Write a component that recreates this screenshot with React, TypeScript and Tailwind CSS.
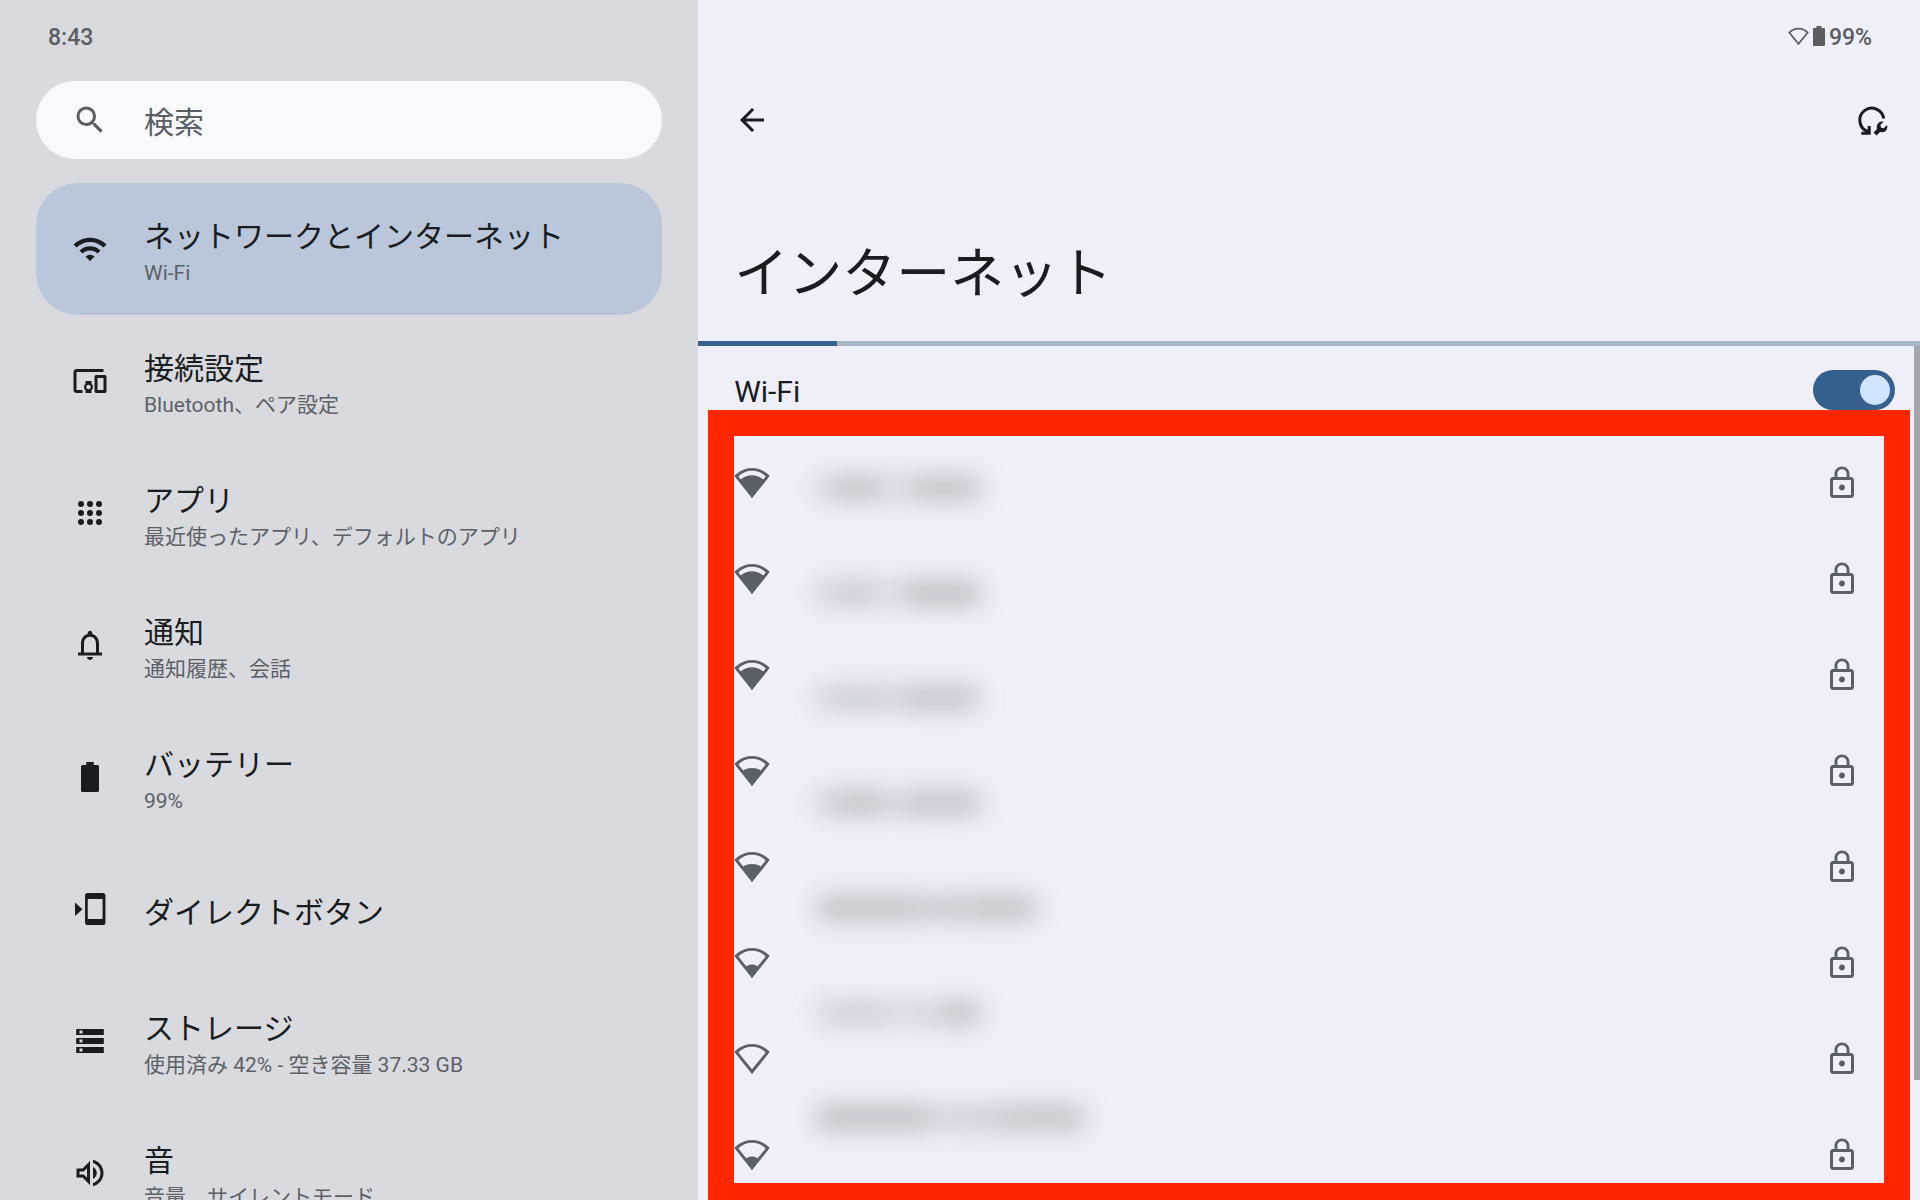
import type { ReactNode } from "react";
import { MdArrowBack, MdDevicesOther, MdLockOutline, MdOutlineVolumeUp, MdSearch, MdWifi } from "react-icons/md";

const AppsIcon = () => (
  <svg viewBox="0 0 24 24" className="w-9 h-9" fill="currentColor">
    {[6, 12, 18].map((y) => [6, 12, 18].map((x) => <circle key={`${x}-${y}`} cx={x} cy={y} r="2" />))}
  </svg>
);

const BellIcon = () => (
  <svg viewBox="0 0 24 24" className="w-9 h-9" fill="currentColor">
    <path d="M18 17v-6c0-3.07-1.63-5.64-4.5-6.32V4c0-.83-.67-1.5-1.5-1.5s-1.5.67-1.5 1.5v.68C7.64 5.36 6 7.92 6 11v6H4v2h16v-2h-2zm-2 0H8v-6c0-2.48 1.51-4.5 4-4.5s4 2.02 4 4.5v6zm-4 5c1.1 0 2-.9 2-2h-4c0 1.1.9 2 2 2z" />
  </svg>
);

const BatteryIcon = ({ viewBox = "0 0 24 24", className }: { viewBox?: string; className: string }) => (
  <svg viewBox={viewBox} className={className} fill="currentColor">
    <path d="M9.5 2h5v2H17a1 1 0 0 1 1 1v16a1 1 0 0 1-1 1H7a1 1 0 0 1-1-1V5a1 1 0 0 1 1-1h2.500z" />
  </svg>
);

const DirectButtonIcon = () => (
  <svg viewBox="0 0 24 24" className="w-9 h-9" fill="currentColor">
    <path d="M2 7.600v9l5-4.500z" />
    <path
      fillRule="evenodd"
      d="M10.400 1.300h10.200a1.700 1.700 0 0 1 1.700 1.700v18a1.700 1.700 0 0 1-1.700 1.700h-10.200A1.700 1.700 0 0 1 8.700 21V3a1.700 1.700 0 0 1 1.700-1.700zM10.500 5.300v13.400h9.900V5.300z"
    />
  </svg>
);

const StorageIcon = () => (
  <svg viewBox="0 0 24 24" className="w-9 h-9" fill="currentColor">
    <path
      fillRule="evenodd"
      d="M2.800 4h18.400v4H2.800zM5 5v2h2V5zM2.800 10h18.400v4H2.800zM5 11v2h2v-2zM2.800 16h18.400v4H2.800zM5 17v2h2v-2z"
    />
  </svg>
);

const fills: Record<number, string> = {
  1: "M12 22 7.500 15.300 8.300 14.200C10.300 12.500 13.700 12.500 15.700 14.200L16.500 15.300z",
  2: "M12 22 5.600 12.200C8.800 9.300 15.200 9.300 18.400 12.200z",
  3: "M12 22 3.900 10.200C8.500 5.700 15.500 5.700 20.100 10.200z",
};

const SignalIcon = ({ level, className }: { level: number; className: string }) => (
  <svg viewBox="0 0 24 24" className={className} fill="currentColor">
    <path
      fillRule="evenodd"
      d="M.2 7.400C3.300 4 7.400 2 12 2s8.700 2 11.800 5.400L12 22zM2.900 7.600 12 18.900l9.100-11.300C18.600 5.200 15.500 3.900 12 3.900S5.400 5.200 2.900 7.600z"
    />
    {level > 0 && <path d={fills[level]} />}
  </svg>
);

const RepairIcon = () => (
  <svg viewBox="0 0 36 36" className="w-9 h-9" fill="none" stroke="currentColor">
    <path strokeWidth="3" d="M29.700 16.500A12 12 0 1 0 13.200 29.200" />
    <path fill="currentColor" stroke="none" d="M13.700 24h3v8.700H7.300v-3h3.900l2.500-2z" />
    <path strokeWidth="4.200" d="M21 32l5.800-5.800" />
    <path
      fill="currentColor"
      stroke="none"
      d="M29.600 19.700a5.400 5.400 0 1 0 3.500 3.300l-3.400 3.300-2.600-.6-.7-2.700z"
    />
  </svg>
);

type Item = { title: string; sub?: string; icon: ReactNode; active?: boolean };

const items: Item[] = [
  { title: "ネットワークとインターネット", sub: "Wi-Fi", icon: <MdWifi className="w-9 h-9" />, active: true },
  { title: "接続設定", sub: "Bluetooth、ペア設定", icon: <MdDevicesOther className="w-9 h-9" /> },
  { title: "アプリ", sub: "最近使ったアプリ、デフォルトのアプリ", icon: <AppsIcon /> },
  { title: "通知", sub: "通知履歴、会話", icon: <BellIcon /> },
  { title: "バッテリー", sub: "99%", icon: <BatteryIcon className="w-9 h-9" /> },
  { title: "ダイレクトボタン", icon: <DirectButtonIcon /> },
  { title: "ストレージ", sub: "使用済み 42% - 空き容量 37.33 GB", icon: <StorageIcon /> },
  { title: "音", sub: "音量、サイレントモード", icon: <MdOutlineVolumeUp className="w-9 h-9" /> },
];

const levels = [3, 3, 3, 2, 2, 1, 0, 1];

// hidden network names: [width, opacity] of each smudge
const names: [number, number][][] = [
  [[20, 0.22], [46, 0.34], [28, 0.14], [70, 0.34]],
  [[20, 0.22], [42, 0.28], [26, 0.14], [76, 0.36]],
  [[20, 0.22], [54, 0.26], [12, 0.16], [76, 0.32]],
  [[20, 0.24], [50, 0.34], [16, 0.16], [78, 0.32]],
  [[100, 0.34], [14, 0.28], [40, 0.3], [66, 0.34]],
  [[20, 0.2], [50, 0.24], [24, 0.16], [34, 0.2], [36, 0.34]],
  [[112, 0.36], [16, 0.18], [42, 0.24], [24, 0.28], [74, 0.34]],
];

export default function App() {
  return (
    <div className="grid grid-cols-[4fr_7fr] h-screen overflow-hidden bg-[#eeeff8] text-[#191c20] font-[Roboto,'Noto_Sans_CJK_JP',sans-serif]">
      <aside className="bg-[#d9dadf] px-9 overflow-hidden">
        <div className="h-[81px] px-3 pt-[22px] text-[23px] leading-8 font-medium text-[#5c5d61]">8:43</div>

        <label className="flex items-center gap-9 h-[78px] px-9 rounded-full bg-[#f8f9ff] text-[#5a5d62]">
          <MdSearch className="w-9 h-9 shrink-0" />
          <input
            type="search"
            aria-label="検索"
            placeholder="検索"
            className="flex-1 min-w-0 pt-[6px] bg-transparent text-[30px] leading-10 outline-none placeholder:text-[#5a5d62]"
          />
        </label>

        <nav className="mt-6">
          {items.map((item) => (
            <a
              key={item.title}
              href="#"
              className={`flex items-center gap-9 h-[132px] px-9 rounded-[42px] ${item.active ? "bg-[#bac7db]" : ""}`}
            >
              <span className="shrink-0">{item.icon}</span>
              <span className="flex flex-col pt-[7px] whitespace-nowrap">
                <span className="text-[30px] leading-10">{item.title}</span>
                {item.sub && <span className="text-[21px] leading-8 text-[#5d6167]">{item.sub}</span>}
              </span>
            </a>
          ))}
        </nav>
      </aside>

      <main className="flex flex-col min-w-0 overflow-hidden">
        <div className="flex items-center justify-end gap-1 h-[72px] pr-12 text-[#5c5d61]">
          <SignalIcon level={0} className="w-[21px] h-[21px]" />
          <BatteryIcon viewBox="6 2 12 20" className="w-3 h-5" />
          <span className="pt-[3px] text-[23px] leading-8 font-medium">99%</span>
        </div>

        <div className="flex items-center justify-between h-24 px-9 pr-[30px]">
          <button aria-label="戻る">
            <MdArrowBack className="w-9 h-9" />
          </button>
          <button aria-label="修復">
            <RepairIcon />
          </button>
        </div>

        <h1 className="h-[173px] px-9 pt-[67px] text-[54px] leading-[80px]">インターネット</h1>

        <div role="progressbar" aria-label="スキャン中" className="h-[5px] shrink-0 bg-[#a7b6c6]">
          <div className="h-full w-[11.4%] bg-[#36618e]" />
        </div>

        <div className="flex flex-1 min-h-0">
          <div className="flex-1 min-w-0 pl-[10px] pr-1">
            <div className="flex items-center justify-between h-16 pl-[26px] pr-[15px] pt-6">
              <label htmlFor="wifi" className="pt-1 text-[30px] leading-10">
                Wi-Fi
              </label>
              <input
                id="wifi"
                type="checkbox"
                role="switch"
                defaultChecked
                className="appearance-none flex items-center justify-end w-[82px] h-10 px-[5px] rounded-full bg-[#36618e] before:content-[''] before:block before:w-[30px] before:h-[30px] before:rounded-full before:bg-[#d1e4ff]"
              />
            </div>

            <div className="flex h-[799px] border-[26px] border-[#ff2600] overflow-hidden text-[#5b5f68]">
              <ul className="-mt-px">
                {levels.map((level, i) => (
                  <li key={i} className="flex items-center h-24">
                    <SignalIcon level={level} className="w-9 h-9" />
                  </li>
                ))}
              </ul>
              <ul aria-hidden="true" className="flex-1 -mt-px pl-[46px]">
                {names.map((parts, i) => (
                  <li key={i} className="flex items-center h-[105px] blur-[12px]">
                    {parts.map(([width, opacity], j) => (
                      <span key={j} className="h-[26px] bg-[#6e7072]" style={{ width, opacity }} />
                    ))}
                  </li>
                ))}
              </ul>
              <ul className="-mt-px pr-6">
                {levels.map((_, i) => (
                  <li key={i} className="flex items-center h-24">
                    <MdLockOutline className="w-9 h-9" />
                  </li>
                ))}
              </ul>
            </div>
          </div>
          <div className="w-[6px] h-[734px] bg-[#a2a5ad]" />
        </div>
      </main>
    </div>
  );
}
